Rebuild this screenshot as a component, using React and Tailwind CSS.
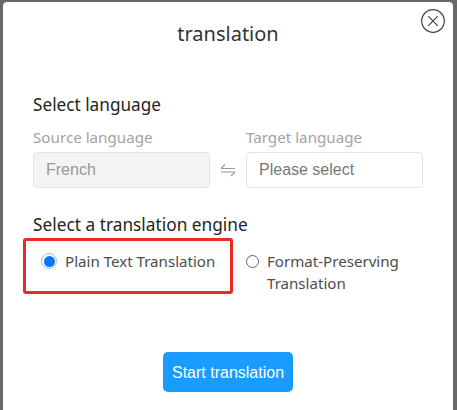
export default function App() {
  const ui = { fontFamily: '"Noto Sans", "Open Sans", sans-serif' };
  return (
    <div className="h-[410px] w-[457px] overflow-hidden bg-[#696969] pt-[2px] pl-[3px] pr-[4px]">
      <div className="relative h-[420px] rounded-[4px] bg-white text-[#1f1f1f]" style={ui}>
        <button className="absolute right-[8px] top-[7px] text-[#444]">
          <svg width="24" height="24" viewBox="0 0 24 24" fill="none" stroke="currentColor" className="block">
            <circle cx="12" cy="12" r="11.3" strokeWidth="1.2" />
            <path d="M7.2 7.2 16.8 16.8M16.8 7.2 7.2 16.8" strokeWidth="1.2" />
          </svg>
        </button>
        <h1 className="pt-[18px] text-center text-[20px] leading-[28px] text-[#333]">translation</h1>
        <div className="pl-[30px] pr-[30px]">
          <h2 className="mt-[45px] text-[17.2px] leading-[24px]">Select language</h2>
          <div className="mt-[9px] flex items-end">
            <div className="w-[177px]">
              <div className="text-[15.2px] leading-[22px] text-[#a3a3a3]">Source language</div>
              <div className="mt-[4px] flex h-[36px] items-center rounded-[4px] border border-[#e4e4e4] bg-[#f4f4f4] pl-[12px] text-[16px] text-[#999]" style={{ fontFamily: '"Liberation Sans", sans-serif' }}>French</div>
            </div>
            <div className="flex h-[36px] w-[36px] items-center justify-center text-[#999]">
              <svg width="16" height="14" viewBox="0 0 16 14" fill="none" stroke="currentColor" strokeWidth="1.1">
                <path d="M1 5.5H15M1 5.5 5 1.5M15 9H1M15 9 11 13" />
              </svg>
            </div>
            <div className="w-[177px]">
              <div className="text-[15.2px] leading-[22px] text-[#a3a3a3]">Target language</div>
              <div className="mt-[4px] flex h-[36px] items-center rounded-[4px] border border-[#e4e4e4] bg-white pl-[12px] text-[16px] text-[#777]" style={{ fontFamily: '"Liberation Sans", sans-serif' }}>Please select</div>
            </div>
          </div>
          <h2 className="mt-[25px] text-[17.3px] leading-[24px]">Select a translation engine</h2>
          <div className="-ml-[10px] mt-[1px] flex items-start">
            <div className="flex h-[56px] w-[210px] shrink-0 items-start rounded-[3px] border-[3px] border-[#ec2a23] pl-[15px] pt-[9px]">
              <span className="mt-[3px] flex h-[16px] w-[16px] items-center justify-center rounded-full border border-[#8cc4ff]">
                <span className="h-[11px] w-[11px] rounded-full bg-[#0a75f5]"></span>
              </span>
              <span className="ml-[8px] whitespace-nowrap text-[15.1px] leading-[22px] text-[#4d4d4d]">Plain Text Translation</span>
            </div>
            <div className="ml-[13px] flex items-start pt-[12px]">
              <span className="mt-[5px] h-[13px] w-[13px] shrink-0 rounded-full border border-[#666]"></span>
              <span className="ml-[8px] w-[150px] text-[15.1px] leading-[22px] text-[#4d4d4d]">Format-Preserving Translation</span>
            </div>
          </div>
          <div className="mt-[58px] flex justify-center">
            <button className="h-[40px] w-[130px] rounded-[5px] bg-[#1a9bff] pt-[1px] text-[16px] font-medium text-white" style={{ fontFamily: '"Liberation Sans", sans-serif' }}>Start translation</button>
          </div>
        </div>
      </div>
    </div>
  );
}
